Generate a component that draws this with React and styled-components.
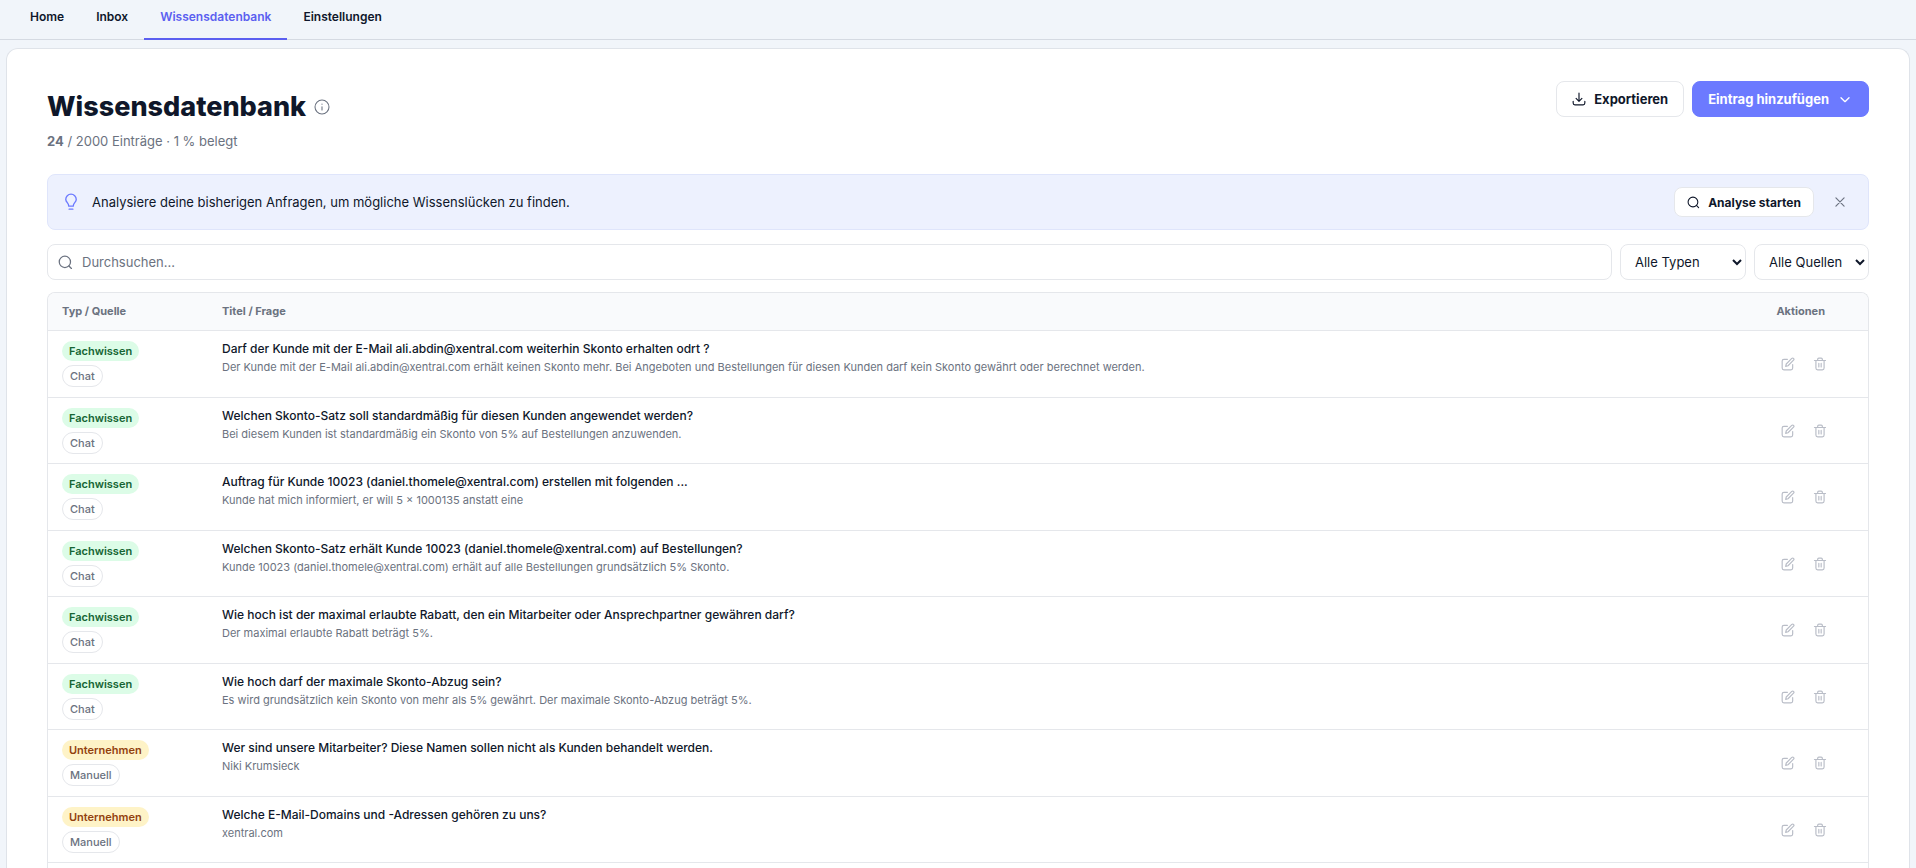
import React, { useState } from 'react';
import styled, { createGlobalStyle, css } from 'styled-components';

// ===================== Data =====================

const navItems = ['Home', 'Inbox', 'Wissensdatenbank', 'Einstellungen'];

const initialEntries = [
  {
    id: 1,
    type: 'Fachwissen',
    source: 'Chat',
    title: 'Darf der Kunde mit der E-Mail ali.abdin@xentral.com weiterhin Skonto erhalten odrt ?',
    text: 'Der Kunde mit der E-Mail ali.abdin@xentral.com erhält keinen Skonto mehr. Bei Angeboten und Bestellungen für diesen Kunden darf kein Skonto gewährt oder berechnet werden.',
  },
  {
    id: 2,
    type: 'Fachwissen',
    source: 'Chat',
    title: 'Welchen Skonto-Satz soll standardmäßig für diesen Kunden angewendet werden?',
    text: 'Bei diesem Kunden ist standardmäßig ein Skonto von 5% auf Bestellungen anzuwenden.',
  },
  {
    id: 3,
    type: 'Fachwissen',
    source: 'Chat',
    title: 'Auftrag für Kunde 10023 (daniel.thomele@xentral.com) erstellen mit folgenden ...',
    text: 'Kunde hat mich informiert, er will 5 × 1000135 anstatt eine',
  },
  {
    id: 4,
    type: 'Fachwissen',
    source: 'Chat',
    title: 'Welchen Skonto-Satz erhält Kunde 10023 (daniel.thomele@xentral.com) auf Bestellungen?',
    text: 'Kunde 10023 (daniel.thomele@xentral.com) erhält auf alle Bestellungen grundsätzlich 5% Skonto.',
  },
  {
    id: 5,
    type: 'Fachwissen',
    source: 'Chat',
    title: 'Wie hoch ist der maximal erlaubte Rabatt, den ein Mitarbeiter oder Ansprechpartner gewähren darf?',
    text: 'Der maximal erlaubte Rabatt beträgt 5%.',
  },
  {
    id: 6,
    type: 'Fachwissen',
    source: 'Chat',
    title: 'Wie hoch darf der maximale Skonto-Abzug sein?',
    text: 'Es wird grundsätzlich kein Skonto von mehr als 5% gewährt. Der maximale Skonto-Abzug beträgt 5%.',
  },
  {
    id: 7,
    type: 'Unternehmen',
    source: 'Manuell',
    title: 'Wer sind unsere Mitarbeiter? Diese Namen sollen nicht als Kunden behandelt werden.',
    text: 'Niki Krumsieck',
  },
  {
    id: 8,
    type: 'Unternehmen',
    source: 'Manuell',
    title: 'Welche E-Mail-Domains und -Adressen gehören zu uns?',
    text: 'xentral.com',
  },
];

// ===================== Styled Components =====================

const GlobalStyle = createGlobalStyle`
  *, *::before, *::after {
    box-sizing: border-box;
  }

  body {
    margin: 0;
    background: #f1f5fa;
    color: #0f172a;
    font-family: 'Inter', 'Liberation Sans', sans-serif;
    font-size: 13px;
    overflow: hidden;
  }

  button, input, select {
    font: inherit;
    color: inherit;
  }
`;

const Page = styled.div`
  display: flex;
  flex-direction: column;
  height: 100vh;
`;

const Nav = styled.nav`
  display: flex;
  flex: none;
  height: 40px;
  padding: 0 14px;
  border-bottom: 1px solid #d5dae2;
`;

const NavLink = styled.a`
  height: 40px;
  padding: 8px 16px 0;
  border-bottom: 2px solid ${(props) => (props.$active ? '#5b5ff0' : 'transparent')};
  color: ${(props) => (props.$active ? '#5b5ff0' : '#0f172a')};
  font-size: 12px;
  font-weight: 600;
  line-height: 18px;
  text-decoration: none;
`;

const Panel = styled.main`
  display: flex;
  flex: 1;
  flex-direction: column;
  min-height: 0;
  margin: 8px 6px 0;
  padding: 32px 40px 0;
  background: #fff;
  border: 1px solid #dfe3e9;
  border-bottom: 0;
  border-radius: 12px 12px 0 0;
  overflow: hidden;
`;

const Header = styled.header`
  display: flex;
  flex: none;
  justify-content: space-between;
  align-items: flex-start;
  margin-bottom: 23px;
`;

const TitleRow = styled.div`
  display: flex;
  align-items: center;
  gap: 8px;
  padding-top: 8px;
  color: #6b7280;
`;

const Title = styled.h1`
  margin: 0;
  color: #0f172a;
  font-size: 27px;
  font-weight: 800;
  line-height: 36px;
`;

const Usage = styled.p`
  margin: 6px 0 0;
  color: #6b7280;
  font-size: 13px;
  line-height: 20px;
`;

const HeaderActions = styled.div`
  display: flex;
  gap: 8px;
`;

const Button = styled.button`
  display: inline-flex;
  align-items: center;
  gap: 8px;
  height: 36px;
  padding: 0 15px;
  background: #fff;
  border: 1px solid #e5e7eb;
  border-radius: 8px;
  color: #0f172a;
  font-size: 13px;
  font-weight: 700;
  cursor: pointer;

  ${(props) =>
    props.$primary &&
    css`
      background: #6c7aff;
      border-color: #6c7aff;
      color: #fff;
    `}

  ${(props) =>
    props.$small &&
    css`
      height: 30px;
      padding: 0 12px;
      font-size: 12px;
    `}
`;

const Banner = styled.section`
  display: flex;
  flex: none;
  align-items: center;
  gap: 12px;
  height: 56px;
  margin-bottom: 14px;
  padding: 0 14px;
  background: #edf1fe;
  border: 1px solid #dfe5fb;
  border-radius: 8px;
  color: #6c7aff;
`;

const BannerText = styled.p`
  flex: 1;
  margin: 0;
  color: #0f172a;
  font-size: 13px;
`;

const IconButton = styled.button`
  display: inline-flex;
  align-items: center;
  justify-content: center;
  width: 28px;
  height: 28px;
  padding: 0;
  background: none;
  border: 0;
  color: ${(props) => (props.$muted ? '#b9bdc7' : '#6b7280')};
  cursor: pointer;
`;

const Filters = styled.div`
  display: flex;
  flex: none;
  gap: 8px;
  margin-bottom: 12px;
`;

const SearchBox = styled.label`
  display: flex;
  flex: 1;
  align-items: center;
  gap: 9px;
  height: 36px;
  padding: 0 10px;
  border: 1px solid #e5e7eb;
  border-radius: 8px;
  color: #6b7280;
`;

const SearchInput = styled.input`
  flex: 1;
  padding: 0;
  background: none;
  border: 0;
  outline: 0;
  color: #0f172a;

  &::placeholder {
    color: #6b7280;
    opacity: 1;
  }
`;

const Select = styled.select`
  width: ${(props) => props.$width};
  height: 36px;
  padding: 0 0 0 10px;
  background: #fff;
  border: 1px solid #e5e7eb;
  border-radius: 8px;
`;

const TableFrame = styled.div`
  flex: 1;
  border: 1px solid #e5e7eb;
  border-bottom: 0;
  border-radius: 8px 8px 0 0;
  overflow: hidden;
`;

const Table = styled.table`
  width: 100%;
  border-spacing: 0;
  table-layout: fixed;
`;

const HeadCell = styled.th`
  width: ${(props) => props.$width};
  height: 38px;
  padding: 0 14px 1px;
  background: #f9fafc;
  border-bottom: 1px solid #e5e7eb;
  color: #6b7280;
  font-size: 11px;
  font-weight: 700;
  text-align: ${(props) => props.$align || 'left'};

  &:last-child {
    padding-right: 43px;
  }
`;

const Cell = styled.td`
  padding: 10px 14px;
  border-bottom: 1px solid #e5e7eb;
  vertical-align: top;

  tr:nth-child(even) > & {
    padding-bottom: 9px;
  }
`;

const Badges = styled.div`
  display: flex;
  flex-direction: column;
  align-items: flex-start;
  gap: 4px;
`;

const badgeColors = {
  Fachwissen: { background: '#dcfce7', color: '#166534' },
  Unternehmen: { background: '#fef3c7', color: '#92400e' },
};

const Badge = styled.span`
  padding: 2px 7px;
  background: ${(props) => badgeColors[props.$type].background};
  border-radius: 10px;
  color: ${(props) => badgeColors[props.$type].color};
  font-size: 11px;
  font-weight: 600;
  line-height: 16px;
`;

const SourceBadge = styled.span`
  padding: 2px 7px;
  border: 1px solid #e5e7eb;
  border-radius: 11px;
  color: #6b7280;
  font-size: 11px;
  font-weight: 500;
  line-height: 16px;
`;

const EntryTitle = styled.div`
  font-size: 12px;
  font-weight: 500;
  line-height: 16px;
`;

const EntryText = styled.div`
  margin-top: 2px;
  color: #6b7280;
  font-size: 11px;
  line-height: 16px;
  overflow: hidden;
  text-overflow: ellipsis;
  white-space: nowrap;
`;

const RowActions = styled.div`
  display: flex;
  justify-content: flex-end;
  gap: 4px;
  padding: 9px 20px 0 0;
`;

const Svg = styled.svg`
  flex: none;
  fill: none;
  stroke: currentColor;
  stroke-linecap: round;
  stroke-linejoin: round;
`;

// ===================== Icons =====================

function Icon({ size = 16, stroke = 2, children }) {
  return (
    <Svg width={size} height={size} viewBox="0 0 24 24" strokeWidth={stroke} aria-hidden="true">
      {children}
    </Svg>
  );
}

const SearchIcon = ({ size }) => (
  <Icon size={size}>
    <circle cx="11" cy="11" r="9" />
    <path d="m21.5 21.5-4-4" />
  </Icon>
);

const InfoIcon = () => (
  <Icon size={16} stroke={1.6}>
    <circle cx="12" cy="12" r="10.5" />
    <path d="M12 11.5v5M12 7.5v.2" />
  </Icon>
);

const ExportIcon = () => (
  <Icon size={14}>
    <path d="M12 2v14M7 11l5 5 5-5M2 16v3a3 3 0 0 0 3 3h14a3 3 0 0 0 3-3v-3" />
  </Icon>
);

const ChevronIcon = () => (
  <Icon size={16}>
    <path d="m6 10 6 6 6-6" />
  </Icon>
);

const BulbIcon = () => (
  <Icon size={18} stroke={1.8}>
    <path d="M9 17.5c0-2.2-.9-3.3-2-4.7A7 7 0 0 1 5 8.500a7 7 0 0 1 14 0c0 1.700-.9 3.100-2 4.300-1.100 1.400-2 2.500-2 4.700zM9.500 21.500h5" />
  </Icon>
);

const CloseIcon = () => (
  <Icon size={14}>
    <path d="m5 5 14 14M19 5 5 19" />
  </Icon>
);

const EditIcon = () => (
  <Icon size={14}>
    <path d="M11 4H5a3 3 0 0 0-3 3v12a3 3 0 0 0 3 3h12a3 3 0 0 0 3-3v-6" />
    <path d="M18.500 2.500a2.100 2.100 0 0 1 3 3L12 15l-4 1 1-4z" />
  </Icon>
);

const TrashIcon = () => (
  <Icon size={14}>
    <path d="M2.500 6h19M5 6v13a3 3 0 0 0 3 3h8a3 3 0 0 0 3-3V6M8 6V4a2 2 0 0 1 2-2h4a2 2 0 0 1 2 2v2M10 11v6M14 11v6" />
  </Icon>
);

// ===================== Component =====================

function App() {
  const [entries, setEntries] = useState(initialEntries);
  const [query, setQuery] = useState('');
  const [type, setType] = useState('');
  const [source, setSource] = useState('');
  const [showBanner, setShowBanner] = useState(true);

  const visibleEntries = entries.filter(
    (entry) =>
      (!type || entry.type === type) &&
      (!source || entry.source === source) &&
      `${entry.title} ${entry.text}`.toLowerCase().includes(query.toLowerCase())
  );

  return (
    <Page>
      <GlobalStyle />
      <Nav>
        {navItems.map((item) => (
          <NavLink key={item} href={`#${item.toLowerCase()}`} $active={item === 'Wissensdatenbank'}>
            {item}
          </NavLink>
        ))}
      </Nav>

      <Panel>
        <Header>
          <div>
            <TitleRow>
              <Title>Wissensdatenbank</Title>
              <InfoIcon />
            </TitleRow>
            <Usage>
              <strong>24</strong> / 2000 Einträge · 1 % belegt
            </Usage>
          </div>
          <HeaderActions>
            <Button type="button">
              <ExportIcon />
              Exportieren
            </Button>
            <Button type="button" $primary>
              Eintrag hinzufügen
              <ChevronIcon />
            </Button>
          </HeaderActions>
        </Header>

        {showBanner && (
          <Banner>
            <BulbIcon />
            <BannerText>Analysiere deine bisherigen Anfragen, um mögliche Wissenslücken zu finden.</BannerText>
            <Button type="button" $small>
              <SearchIcon size={13} />
              Analyse starten
            </Button>
            <IconButton type="button" aria-label="Schließen" onClick={() => setShowBanner(false)}>
              <CloseIcon />
            </IconButton>
          </Banner>
        )}

        <Filters>
          <SearchBox>
            <SearchIcon size={15} />
            <SearchInput
              type="text"
              aria-label="Durchsuchen"
              placeholder="Durchsuchen..."
              value={query}
              onChange={(e) => setQuery(e.target.value)}
            />
          </SearchBox>
          <Select $width="126px" aria-label="Typ" value={type} onChange={(e) => setType(e.target.value)}>
            <option value="">Alle Typen</option>
            <option>Fachwissen</option>
            <option>Unternehmen</option>
          </Select>
          <Select $width="115px" aria-label="Quelle" value={source} onChange={(e) => setSource(e.target.value)}>
            <option value="">Alle Quellen</option>
            <option>Chat</option>
            <option>Manuell</option>
          </Select>
        </Filters>

        <TableFrame>
          <Table>
            <thead>
              <tr>
                <HeadCell $width="160px">Typ / Quelle</HeadCell>
                <HeadCell>Titel / Frage</HeadCell>
                <HeadCell $width="140px" $align="right">Aktionen</HeadCell>
              </tr>
            </thead>
            <tbody>
              {visibleEntries.map((entry) => (
                <tr key={entry.id}>
                  <Cell>
                    <Badges>
                      <Badge $type={entry.type}>{entry.type}</Badge>
                      <SourceBadge>{entry.source}</SourceBadge>
                    </Badges>
                  </Cell>
                  <Cell>
                    <EntryTitle>{entry.title}</EntryTitle>
                    <EntryText>{entry.text}</EntryText>
                  </Cell>
                  <Cell>
                    <RowActions>
                      <IconButton type="button" aria-label="Bearbeiten" $muted>
                        <EditIcon />
                      </IconButton>
                      <IconButton
                        type="button"
                        aria-label="Löschen"
                        $muted
                        onClick={() => setEntries(entries.filter((item) => item.id !== entry.id))}
                      >
                        <TrashIcon />
                      </IconButton>
                    </RowActions>
                  </Cell>
                </tr>
              ))}
            </tbody>
          </Table>
        </TableFrame>
      </Panel>
    </Page>
  );
}

export default App;
